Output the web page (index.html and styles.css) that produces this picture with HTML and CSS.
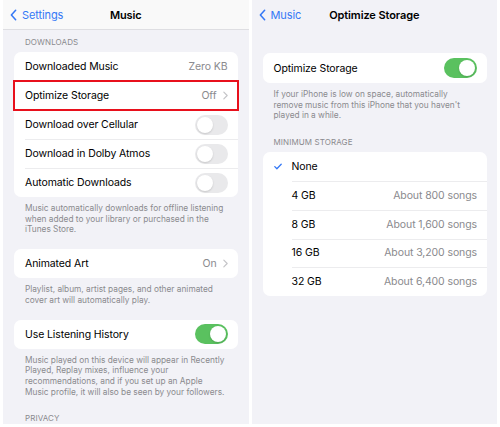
FILE: index.html
```html
<!DOCTYPE html>
<html>
<head>
    <meta charset="UTF-8">
    <meta name="viewport" content="width=device-width, initial-scale=1.0">
    <title>Music Settings</title>
    <link rel="stylesheet" href="styles.css">
</head>
<body>
    <div class="screens">
        <!-- Music settings -->
        <div class="screen">
            <div class="nav nav-solid">
                <div class="back">
                    <svg class="back-chevron" viewBox="0 0 8 14"><path d="M6.5 1.5L1.5 7l5 5.5" /></svg>
                    <span>Settings</span>
                </div>
                <div class="nav-title">Music</div>
            </div>

            <div class="content">
                <div class="section-header">Downloads</div>
                <div class="card">
                    <div class="row">
                        <span class="label">Downloaded Music</span>
                        <span class="value">Zero KB</span>
                    </div>
                    <div class="row row-marked">
                        <span class="label">Optimize Storage</span>
                        <span class="value">Off</span>
                        <svg class="chevron" viewBox="0 0 6 10"><path d="M1 1l4 4-4 4" /></svg>
                    </div>
                    <div class="row">
                        <span class="label">Download over Cellular</span>
                        <span class="toggle"></span>
                    </div>
                    <div class="row">
                        <span class="label">Download in Dolby Atmos</span>
                        <span class="toggle"></span>
                    </div>
                    <div class="row">
                        <span class="label">Automatic Downloads</span>
                        <span class="toggle"></span>
                    </div>
                </div>
                <p class="footer">Music automatically downloads for offline listening when added to your library or purchased in the iTunes Store.</p>

                <div class="card">
                    <div class="row">
                        <span class="label">Animated Art</span>
                        <span class="value">On</span>
                        <svg class="chevron" viewBox="0 0 6 10"><path d="M1 1l4 4-4 4" /></svg>
                    </div>
                </div>
                <p class="footer">Playlist, album, artist pages, and other animated cover art will automatically play.</p>

                <div class="card">
                    <div class="row">
                        <span class="label">Use Listening History</span>
                        <span class="toggle on"></span>
                    </div>
                </div>
                <p class="footer">Music played on this device will appear in Recently Played, Replay mixes, influence your recommendations, and if you set up an Apple Music profile, it will also be seen by your followers.</p>

                <div class="section-header">Privacy</div>
            </div>
        </div>

        <!-- Optimize Storage -->
        <div class="screen">
            <div class="nav">
                <div class="back">
                    <svg class="back-chevron" viewBox="0 0 8 14"><path d="M6.5 1.5L1.5 7l5 5.5" /></svg>
                    <span>Music</span>
                </div>
                <div class="nav-title">Optimize Storage</div>
            </div>

            <div class="content content-right">
                <div class="card">
                    <div class="row row-tall">
                        <span class="label">Optimize Storage</span>
                        <span class="toggle on"></span>
                    </div>
                </div>
                <p class="footer">If your iPhone is low on space, automatically remove music from this iPhone that you haven't played in a while.</p>

                <div class="section-header">Minimum Storage</div>
                <div class="card">
                    <div class="row option">
                        <span class="check">
                            <svg viewBox="0 0 10 8"><path d="M1 4.2l2.6 2.6L9 1.2" /></svg>
                        </span>
                        <span class="label">None</span>
                    </div>
                    <div class="row option">
                        <span class="check"></span>
                        <span class="label">4 GB</span>
                        <span class="value">About 800 songs</span>
                    </div>
                    <div class="row option">
                        <span class="check"></span>
                        <span class="label">8 GB</span>
                        <span class="value">About 1,600 songs</span>
                    </div>
                    <div class="row option">
                        <span class="check"></span>
                        <span class="label">16 GB</span>
                        <span class="value">About 3,200 songs</span>
                    </div>
                    <div class="row option">
                        <span class="check"></span>
                        <span class="label">32 GB</span>
                        <span class="value">About 6,400 songs</span>
                    </div>
                </div>
            </div>
        </div>
    </div>
</body>
</html>
```

FILE: styles.css
```css
body {
    margin: 0;
    background: #ffffff;
    font-family: Inter, "Noto Sans", sans-serif;
    color: #000;
}
.screens {
    display: flex;
    gap: 3px;
    padding: 0 3px 3px 3px;
    height: 424px;
}
.screen {
    flex: 1;
    background: #f2f2f7;
    overflow: hidden;
}
.nav {
    position: relative;
    height: 30px;
    display: flex;
    align-items: center;
    justify-content: center;
}
.nav-solid {
    background: #f9f9f9;
    border-bottom: 1px solid #dedee2;
    box-sizing: border-box;
}
.back {
    position: absolute;
    left: 7px;
    top: 0;
    height: 30px;
    display: flex;
    align-items: center;
    gap: 5px;
    color: #3478f6;
    font-size: 11px;
    letter-spacing: -0.1px;
}
.back-chevron {
    width: 7px;
    height: 12px;
    fill: none;
    stroke: #3478f6;
    stroke-width: 1.8;
    stroke-linecap: round;
    stroke-linejoin: round;
}
.nav-title {
    font-size: 11px;
    font-weight: 600;
    letter-spacing: -0.1px;
}
.content {
    padding: 0 11px;
}
.content-right {
    padding: 23px 10px 0 11px;
}
.section-header {
    font-size: 8px;
    text-transform: uppercase;
    color: #8a8a8e;
    padding: 7px 11px 5px;
    letter-spacing: 0.1px;
}
.footer + .section-header {
    padding-top: 2px;
}
.card {
    background: #fff;
    border-radius: 7px;
}
.row {
    height: 29px;
    display: flex;
    align-items: center;
    padding: 0 10px 0 11px;
    font-size: 10.5px;
    letter-spacing: -0.1px;
    position: relative;
}
.row + .row::before {
    content: "";
    position: absolute;
    top: 0;
    left: 11px;
    right: 0;
    border-top: 1px solid #ececee;
}
.row-tall {
    height: 30px;
}
.row-marked {
    outline: 2px solid #e8101c;
    outline-offset: -1px;
    z-index: 1;
}
.row-marked::before {
    display: none;
}
.label {
    flex: 1;
}
.value {
    color: #8a8a8e;
}
.chevron {
    width: 5px;
    height: 9px;
    margin-left: 6px;
    fill: none;
    stroke: #c4c4c7;
    stroke-width: 1.4;
    stroke-linecap: round;
    stroke-linejoin: round;
}
.toggle {
    width: 33px;
    height: 20px;
    border-radius: 10px;
    background: #e9e9eb;
    position: relative;
}
.toggle::after {
    content: "";
    position: absolute;
    top: 2px;
    left: 2px;
    width: 16px;
    height: 16px;
    border-radius: 50%;
    background: #fff;
    box-shadow: 0 1px 2px rgba(0,0,0,0.15);
}
.toggle.on {
    background: #5ac15f;
}
.toggle.on::after {
    left: 15px;
}
.footer {
    margin: 0;
    padding: 6px 11px 14px;
    font-size: 8.3px;
    line-height: 10.7px;
    color: #8a8a8e;
}
.option {
    height: 28.8px;
}
.option + .option::before {
    left: 29px;
}
.check {
    width: 18px;
    display: flex;
    align-items: center;
}
.check svg {
    width: 8px;
    height: 7px;
    fill: none;
    stroke: #3478f6;
    stroke-width: 1.6;
    stroke-linecap: round;
    stroke-linejoin: round;
}
```
